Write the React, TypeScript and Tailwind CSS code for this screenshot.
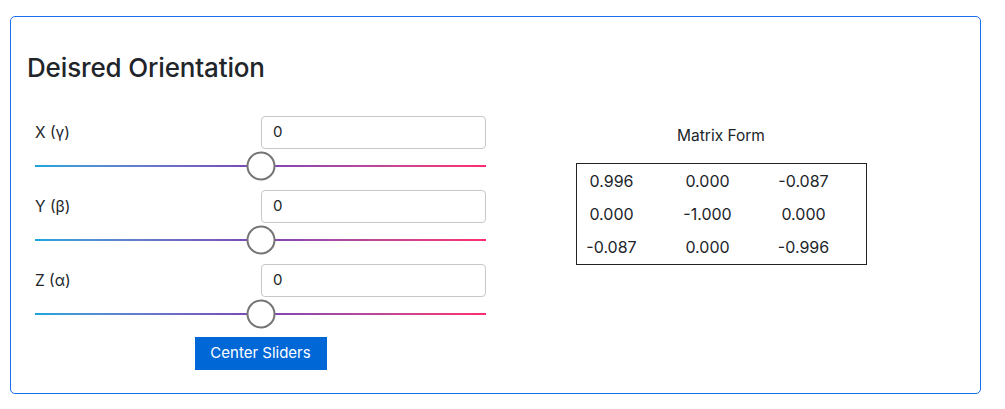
import React from "react";

const rows = [
  { label: "X (γ)", value: "0" },
  { label: "Y (β)", value: "0" },
  { label: "Z (α)", value: "0" },
];

const matrix = [
  ["0.996", "0.000", "-0.087"],
  ["0.000", "-1.000", "0.000"],
  ["-0.087", "0.000", "-0.996"],
];

function Slider() {
  return (
    <div className="relative h-[34px] flex items-center">
      <div className="h-[2px] w-full bg-gradient-to-r from-[#16a6dc] via-[#7b45b6] to-[#ff2a72]" />
      {/* thumb */}
      <div className="absolute left-1/2 top-1/2 -translate-x-1/2 -translate-y-1/2 w-[29px] h-[29px] rounded-full bg-white border-2 border-[#757575]" />
    </div>
  );
}

export default function App() {
  return (
    <div
      className="bg-white min-h-[409px] pt-[16px] pl-[10px] pr-[24px] text-[#212529]"
      style={{ fontFamily: "Inter, 'Liberation Sans', sans-serif" }}
    >
      <div className="border border-[#1a6ff0] rounded-[5px] pb-[23px]">
        {/* Title */}
        <h2 className="text-[26px] font-medium leading-[32px] pl-[16px] pt-[35px] tracking-[-0.15px]">
          Deisred Orientation
        </h2>

        <div className="flex px-[24px] mt-[32px]">
          {/* Sliders */}
          <div className="w-[451px] flex flex-col">
            {rows.map((r, i) => (
              <div key={r.label} className={i > 0 ? "mt-[7px]" : ""}>
                <div className="flex items-center h-[33px]">
                  <span className="text-[15.5px] w-[226px]">{r.label}</span>
                  <div className="flex-1 h-[33px] border border-[#c8c8c8] rounded-[4px] flex items-center px-[11px] text-[15px]">
                    {r.value}
                  </div>
                </div>
                <Slider />
              </div>
            ))}
            <div className="flex justify-center mt-[6px]">
              <button className="bg-[#0067d6] text-white text-[15px] w-[132px] h-[33px]">
                Center Sliders
              </button>
            </div>
          </div>

          {/* Matrix */}
          <div className="flex-1 flex flex-col items-center pt-[10px]">
            <div className="text-[15.5px] leading-[20px]">Matrix Form</div>
            <div className="mt-[17px] w-[291px] h-[102px] border border-[#222] text-[16px]">
              {matrix.map((row, i) => (
                <div key={i} className="grid grid-cols-[70px_70px_70px] gap-x-[26px] h-[33px] items-center">
                  {row.map((v, j) => (
                    <span key={j} className="text-center">
                      {v}
                    </span>
                  ))}
                </div>
              ))}
            </div>
          </div>
        </div>
      </div>
    </div>
  );
}
